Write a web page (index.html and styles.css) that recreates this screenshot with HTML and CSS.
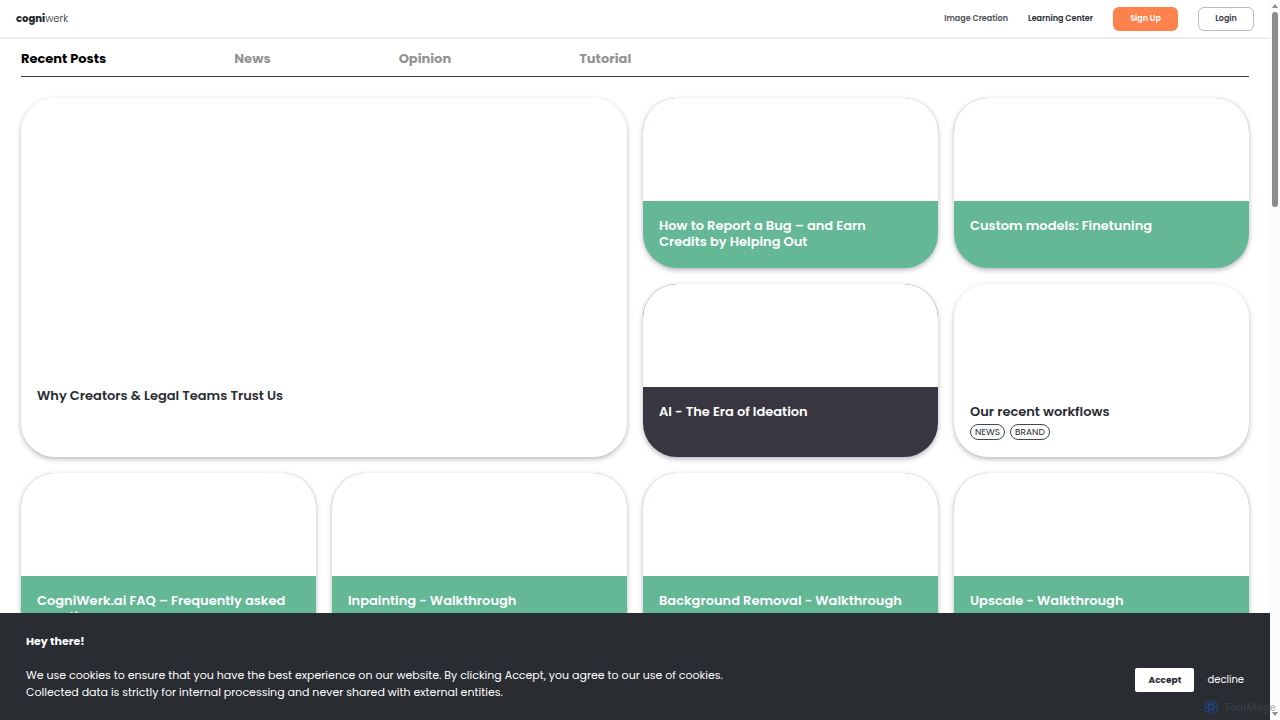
FILE: index.html
```
<!DOCTYPE html>
<html lang="en">
<head>
    <meta charset="UTF-8">
    <meta name="viewport" content="width=device-width, initial-scale=1.0">
    <title>CogniWerk - Learning Center</title>
    <link rel="stylesheet" href="styles.css">
</head>
<body>
    <div class="page">
        <header class="topbar">
            <a href="#" class="logo"><b>cogni</b><span>werk</span></a>
            <nav class="topnav">
                <a href="#" class="muted">Image Creation</a>
                <a href="#">Learning Center</a>
                <button class="btn signup">Sign Up</button>
                <button class="btn login">Login</button>
            </nav>
        </header>

        <main>
            <nav class="tabs">
                <a href="#" class="active">Recent Posts</a>
                <a href="#">News</a>
                <a href="#">Opinion</a>
                <a href="#">Tutorial</a>
            </nav>

            <section class="posts">
                <article class="card light big">
                    <div class="thumb"></div>
                    <div class="info">
                        <h2>Why Creators &amp; Legal Teams Trust Us</h2>
                    </div>
                </article>
                <article class="card green">
                    <div class="thumb"></div>
                    <div class="info">
                        <h2>How to Report a Bug – and Earn Credits by Helping Out</h2>
                    </div>
                </article>
                <article class="card green">
                    <div class="thumb"></div>
                    <div class="info">
                        <h2>Custom models: Finetuning</h2>
                    </div>
                </article>
                <article class="card dark">
                    <div class="thumb"></div>
                    <div class="info">
                        <h2>AI - The Era of Ideation</h2>
                    </div>
                </article>
                <article class="card light">
                    <div class="thumb"></div>
                    <div class="info">
                        <h2>Our recent workflows</h2>
                        <ul class="tags">
                            <li>NEWS</li>
                            <li>BRAND</li>
                        </ul>
                    </div>
                </article>
                <article class="card green">
                    <div class="thumb"></div>
                    <div class="info">
                        <h2>CogniWerk.ai FAQ – Frequently asked questions</h2>
                    </div>
                </article>
                <article class="card green">
                    <div class="thumb"></div>
                    <div class="info">
                        <h2>Inpainting - Walkthrough</h2>
                    </div>
                </article>
                <article class="card green">
                    <div class="thumb"></div>
                    <div class="info">
                        <h2>Background Removal - Walkthrough</h2>
                    </div>
                </article>
                <article class="card green">
                    <div class="thumb"></div>
                    <div class="info">
                        <h2>Upscale - Walkthrough</h2>
                    </div>
                </article>
            </section>
        </main>
    </div>

    <div class="scrollbar">
        <svg width="6" height="4" viewBox="0 0 6 4"><path d="M0 4 3 0 6 4z"/></svg>
        <div class="track"><div class="handle"></div></div>
        <svg width="6" height="4" viewBox="0 0 6 4"><path d="M0 0 3 4 6 0z"/></svg>
    </div>

    <section class="cookies">
        <div class="message">
            <h3>Hey there!</h3>
            <p>We use cookies to ensure that you have the best experience on our website. By clicking Accept, you agree to our use of cookies.<br>
            Collected data is strictly for internal processing and never shared with external entities.</p>
        </div>
        <div class="actions">
            <button class="accept">Accept</button>
            <button class="decline">decline</button>
        </div>
    </section>

    <div class="watermark">
        <svg width="16" height="16" viewBox="0 0 16 16" fill="none" stroke="#23498f" stroke-width="0.9">
            <path id="petal" d="M5.400 9.500V4a3 3 0 0 1 5.600-1.500M5.400 6.500 8 5l4.500 2.600"/>
            <use href="#petal" transform="rotate(60 8 8)"/>
            <use href="#petal" transform="rotate(120 8 8)"/>
            <use href="#petal" transform="rotate(180 8 8)"/>
            <use href="#petal" transform="rotate(240 8 8)"/>
            <use href="#petal" transform="rotate(300 8 8)"/>
        </svg>
        <span>ToolMage</span>
    </div>
</body>
</html>
```
FILE: styles.css
```
* {
    box-sizing: border-box;
}
body {
    margin: 0;
    height: 100vh;
    display: flex;
    overflow: hidden;
    background-color: white;
    color: #292c31;
    font-family: Poppins, Inter, sans-serif;
}
a {
    color: inherit;
    text-decoration: none;
}
button {
    font-family: inherit;
    cursor: pointer;
}
h2, h3, p, ul {
    margin: 0;
    padding: 0;
}
.page {
    flex: 1;
    overflow: hidden;
}

/* header */
.topbar {
    display: flex;
    justify-content: space-between;
    align-items: center;
    height: 39px;
    padding: 0 16px;
    border-bottom: 2px solid #ededed;
}
.logo {
    font-size: 10px;
}
.logo b {
    font-weight: 800;
}
.logo span {
    font-weight: 300;
}
.topnav {
    display: flex;
    align-items: center;
    gap: 20px;
    font-size: 8px;
    font-weight: 600;
}
.topnav .muted {
    color: #4d5157;
}
.btn {
    height: 24px;
    border-radius: 6px;
    font-size: 8px;
    font-weight: 600;
}
.signup {
    width: 65px;
    border: none;
    background-color: #ff824c;
    color: white;
}
.login {
    width: 56px;
    border: 1px solid #b4bcbc;
    background-color: white;
    color: #3a3d44;
}

/* tabs */
main {
    padding: 0 21px;
}
.tabs {
    display: flex;
    gap: 128px;
    height: 38px;
    line-height: 39px;
    border-bottom: 1px solid #3c3c3c;
    font-size: 13px;
    font-weight: 700;
    color: #929292;
}
.tabs .active {
    color: black;
}

/* cards */
.posts {
    display: grid;
    grid-template-columns: repeat(4, 1fr);
    grid-template-rows: 170px 173px 173px;
    gap: 16px;
    padding-top: 21px;
}
.card {
    display: flex;
    flex-direction: column;
    overflow: hidden;
    border-radius: 34px;
    box-shadow: 0 2px 5px rgba(50, 45, 70, 0.35);
}
.light {
    background-color: white;
}
.green {
    background-color: #64b896;
    color: white;
}
.dark {
    background-color: #393641;
    color: white;
}
.thumb {
    height: 103px;
    background-color: white;
}
.big {
    grid-column: span 2;
    grid-row: span 2;
}
.big .thumb {
    height: 273px;
}
.info {
    flex: 1;
    padding: 17px 24px 16px 16px;
}
.info h2 {
    font-size: 13px;
    line-height: 16px;
    font-weight: 600;
}
.tags {
    display: flex;
    gap: 5px;
    margin-top: 4px;
    list-style: none;
}
.tags li {
    padding: 0 4px;
    border: 1px solid #44474c;
    border-radius: 8px;
    font-size: 9px;
    line-height: 14px;
}

/* scrollbar */
.scrollbar {
    display: flex;
    flex-direction: column;
    align-items: center;
    gap: 4px;
    width: 10px;
    padding: 4px 0;
    background-color: #fcfcfc;
    fill: #8b8b8b;
}
.track {
    flex: 1;
}
.handle {
    width: 6px;
    height: 28%;
    border-radius: 3px;
    background-color: #8b8b8b;
}

/* cookie banner */
.cookies {
    position: fixed;
    left: 0;
    right: 10px;
    bottom: 0;
    display: flex;
    justify-content: space-between;
    padding: 20px 26px 19px;
    background-color: #292c31;
    color: white;
}
.message h3 {
    margin-bottom: 17px;
    font-size: 11px;
    line-height: 17px;
}
.message p {
    font-size: 11px;
    line-height: 17px;
}
.actions {
    display: flex;
    align-items: center;
    gap: 13px;
    padding-top: 26px;
}
.accept {
    width: 59px;
    height: 24px;
    border: none;
    border-radius: 2px;
    background-color: white;
    color: #292c31;
    font-size: 9px;
    font-weight: 700;
}
.decline {
    padding: 0;
    border: none;
    background: none;
    color: white;
    font-size: 10px;
}

.watermark {
    position: fixed;
    right: 4px;
    bottom: 4px;
    display: flex;
    align-items: center;
    gap: 4px;
    font-family: Inter, sans-serif;
    font-size: 11px;
    line-height: 18px;
    font-weight: 600;
    color: rgba(80, 83, 90, 0.4);
}
```
